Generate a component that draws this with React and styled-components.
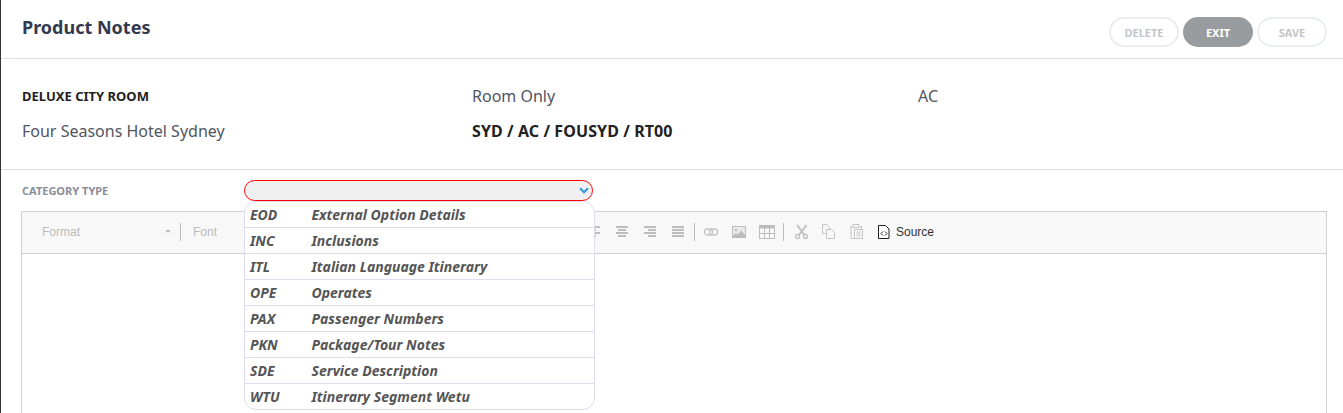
import React from "react";
import styled, { createGlobalStyle } from "styled-components";

const GlobalStyle = createGlobalStyle`
  html, body {
    margin: 0;
    padding: 0;
    background: #fff;
    overflow: hidden;
  }
  * {
    box-sizing: border-box;
  }
`;

const Page = styled.div`
  width: 1343px;
  height: 413px;
  overflow: hidden;
  border-left: 1px solid #333;
  background: #fff;
  font-family: "Noto Sans", "Open Sans", sans-serif;
`;

const Header = styled.header`
  height: 59px;
  display: flex;
  justify-content: space-between;
  padding: 17px 16px 0 21px;
  border-bottom: 1px solid #dfdbf0;
`;

const Title = styled.h1`
  margin: 0;
  font-size: 18px;
  line-height: 21px;
  font-weight: 700;
  color: #343a4e;
`;

const Buttons = styled.div`
  display: flex;
  gap: 4px;
`;

const Button = styled.button`
  width: 70px;
  height: 30px;
  border-radius: 15px;
  border: 2px solid ${(p) => (p.$active ? "#999c9f" : "#e9eded")};
  background: ${(p) => (p.$active ? "#999c9f" : "#fff")};
  color: ${(p) => (p.$active ? "#fff" : "#c3c5c9")};
  font-family: inherit;
  font-size: 11px;
  font-weight: 700;
  padding: 0;
`;

const Info = styled.section`
  height: 111px;
  display: grid;
  grid-template-columns: 450px 446px 1fr;
  grid-auto-rows: 35px;
  align-content: start;
  padding: 20px 0 0 21px;
  border-bottom: 1px solid #dfdde8;
  font-size: 16px;
  line-height: 35px;
  color: #51555f;
`;

const RoomName = styled.div`
  font-size: 13px;
  font-weight: 700;
  color: #222;
`;

const Code = styled.div`
  font-size: 16px;
  font-weight: 700;
  letter-spacing: 0.08px;
  color: #222;
`;

const Body = styled.section`
  padding: 10px 16px 0 20px;
  position: relative;
`;

const CategoryRow = styled.div`
  display: flex;
  align-items: flex-start;
  height: 22px;
`;

const Label = styled.label`
  width: 223px;
  padding: 3px 0 0 1px;
  font-size: 11px;
  line-height: 15px;
  font-weight: 700;
  color: #8b8e97;
`;

const Select = styled.div`
  width: 349px;
  height: 21px;
  border: 1px solid #f00;
  border-radius: 11px;
  background: #f0f0f0;
  display: flex;
  align-items: center;
  justify-content: flex-end;
  padding-right: 3px;
`;

const Dropdown = styled.ul`
  position: absolute;
  left: 243px;
  top: 31px;
  width: 351px;
  margin: 0;
  padding: 0;
  list-style: none;
  background: #fff;
  border: 1px solid #dfdbf0;
  border-radius: 12px;
  z-index: 2;
`;

const Option = styled.li`
  height: 26px;
  display: flex;
  align-items: center;
  padding-left: 5px;
  font-size: 14px;
  font-style: italic;
  font-weight: 700;
  color: #555;
  border-bottom: 1px solid #dfdbf0;

  &:last-child {
    border-bottom: none;
    height: 25px;
  }
`;

const OptionCode = styled.span`
  width: 61.5px;
`;

const Editor = styled.div`
  margin-top: 9px;
  height: 220px;
  border: 1px solid #d1d1d1;
`;

const Toolbar = styled.div`
  height: 42px;
  padding-bottom: 2px;
  background: #f8f8f8;
  border-bottom: 1px solid #d1d1d1;
  display: flex;
  align-items: center;
  font-family: "Liberation Sans", Arial, sans-serif;
  font-size: 12px;
  color: #bbb;
`;

const Combo = styled.div`
  width: ${(p) => p.$width}px;
  padding-left: ${(p) => p.$left}px;
  display: flex;
  align-items: center;
  justify-content: space-between;
  padding-right: 9px;
`;

const Caret = styled.span`
  width: 0;
  height: 0;
  border-left: 3px solid transparent;
  border-right: 3px solid transparent;
  border-top: 3px solid #bbb;
`;

const Sep = styled.span`
  width: 1px;
  height: 18px;
  background: #bcbcbc;
  margin: 0 ${(p) => p.$gap ?? 0}px;
`;

const Group = styled.div`
  display: flex;
  align-items: center;
  gap: ${(p) => p.$gap}px;
  margin-left: ${(p) => p.$left ?? 0}px;
`;

const SourceLabel = styled.span`
  color: #333;
  margin-left: 2px;
`;

const Icon = styled.svg`
  display: block;
  width: 16px;
  height: 16px;
  flex: none;
`;

const Bars = ({ lines }) => (
  <Icon viewBox="0 0 16 16">
    {lines.map(([x, w], i) => (
      <rect key={i} x={x} y={2 + i * 3} width={w} height="2" fill="#bdbdbd" />
    ))}
  </Icon>
);

const chevron = (
  <svg width="10" height="7" viewBox="0 0 10 7">
    <path d="M1 1.2 5 5.2l4-4" fill="none" stroke="#3498db" strokeWidth="2.2" />
  </svg>
);

const options = [
  ["EOD", "External Option Details"],
  ["INC", "Inclusions"],
  ["ITL", "Italian Language Itinerary"],
  ["OPE", "Operates"],
  ["PAX", "Passenger Numbers"],
  ["PKN", "Package/Tour Notes"],
  ["SDE", "Service Description"],
  ["WTU", "Itinerary Segment Wetu"],
];

export default function App() {
  return (
    <Page>
      <GlobalStyle />
      <Header>
        <Title>Product Notes</Title>
        <Buttons>
          <Button>DELETE</Button>
          <Button $active>EXIT</Button>
          <Button>SAVE</Button>
        </Buttons>
      </Header>
      <Info>
        <RoomName>DELUXE CITY ROOM</RoomName>
        <div>Room Only</div>
        <div>AC</div>
        <div>Four Seasons Hotel Sydney</div>
        <Code>SYD / AC / FOUSYD / RT00</Code>
      </Info>
      <Body>
        <CategoryRow>
          <Label>CATEGORY TYPE</Label>
          <Select>{chevron}</Select>
        </CategoryRow>
        <Dropdown>
          {options.map(([code, name]) => (
            <Option key={code}>
              <OptionCode>{code}</OptionCode>
              {name}
            </Option>
          ))}
        </Dropdown>
        <Editor>
          <Toolbar>
            <Combo $width={158} $left={20}>
              Format
              <Caret />
            </Combo>
            <Sep />
            <Combo $width={405} $left={12}>
              Font
            </Combo>
            <Group $gap={12}>
              <Bars lines={[[2, 12], [2, 8], [2, 12], [2, 8]]} />
              <Bars lines={[[2, 12], [4, 8], [2, 12], [4, 8]]} />
              <Bars lines={[[2, 12], [6, 8], [2, 12], [6, 8]]} />
              <Bars lines={[[2, 12], [2, 12], [2, 12], [2, 12]]} />
            </Group>
            <Sep $gap={8} />
            <Group $gap={12}>
              <Icon viewBox="0 0 16 16">
                <rect x="1.5" y="5" width="8" height="6" rx="3" fill="none" stroke="#c4c4c4" strokeWidth="1.3" />
                <rect x="6.5" y="5" width="8" height="6" rx="3" fill="none" stroke="#c4c4c4" strokeWidth="1.3" />
              </Icon>
              <Icon viewBox="0 0 16 16">
                <rect x="1.5" y="2.5" width="13" height="11" fill="#eaeaea" stroke="#bdbdbd" />
                <circle cx="5" cy="6" r="1.3" fill="#bdbdbd" />
                <path d="M2 13V11.5l3-2.5 2 1.5 3-4 4 4.5V13z" fill="#bdbdbd" />
              </Icon>
              <Icon viewBox="0 0 16 16">
                <rect x="0.5" y="1.5" width="15" height="13" fill="#fafafa" stroke="#bdbdbd" />
                <rect x="0.5" y="1.5" width="15" height="3" fill="#bdbdbd" />
                <path d="M5.5 4v10M10.5 4v10M1 9.5h14" stroke="#bdbdbd" />
              </Icon>
            </Group>
            <Sep $gap={8} />
            <Group $gap={12} $left={2}>
              <Icon viewBox="0 0 16 16">
                <path d="M3 1l7.5 10M12.5 1L5 11" stroke="#c0c0c0" strokeWidth="2" fill="none" />
                <circle cx="3.5" cy="12.5" r="2" fill="none" stroke="#c0c0c0" strokeWidth="1.3" />
                <circle cx="11.5" cy="12.5" r="2" fill="none" stroke="#c0c0c0" strokeWidth="1.3" />
              </Icon>
              <Icon viewBox="0 0 16 16">
                <path d="M0.5 0.5h4l3 3v2M0.5 0.5v9h3M4.500 5.500h5l3 3v6h-8z" fill="none" stroke="#c4c4c4" />
              </Icon>
              <Icon viewBox="0 0 16 16">
                <path d="M2.5 2.5H1v12h3M10 2.5h1.5v3M3 0.500h6v3H3zM4.500 5.500h8v9h-8z" fill="none" stroke="#c4c4c4" />
                <path d="M6.500 8h4M6.500 10h4M6.500 12h4" stroke="#c4c4c4" />
              </Icon>
            </Group>
            <Group $gap={0} $left={12}>
              <Icon viewBox="0 0 16 16">
                <path d="M0.5 1.500h7l3.500 3.500v9.500H0.500z" fill="#fff" stroke="#222" />
                <path d="M5 7.500 3 9.500l2 2M7 7.500l2 2-2 2" fill="none" stroke="#222" />
              </Icon>
              <SourceLabel>Source</SourceLabel>
            </Group>
          </Toolbar>
        </Editor>
      </Body>
    </Page>
  );
}
